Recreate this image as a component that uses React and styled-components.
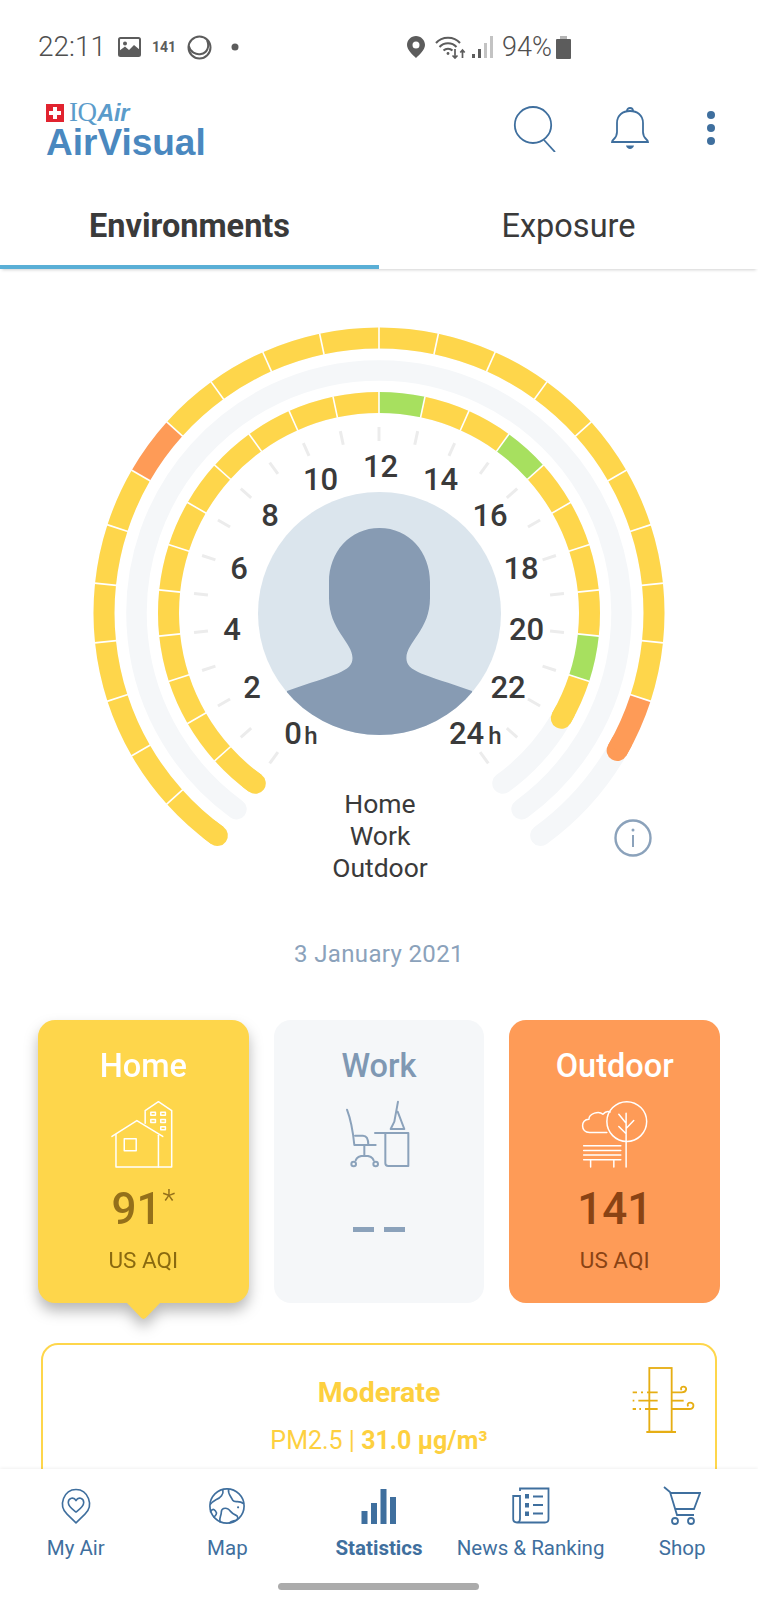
import React from "react";
import styled, { createGlobalStyle } from "styled-components";

const Y = "#fed64b";
const O = "#fe9b57";
const G = "#a7e05f";
const PALE = "#f5f7f9";
const NAVY = "#3f6f9e";
const SLATE = "#8ba2bb";
const INK = "#3a3a3a";

const GlobalStyle = createGlobalStyle`
  html, body { margin: 0; padding: 0; background: #fff; }
  body { font-family: Roboto, "Liberation Sans", sans-serif; }
`;

const Page = styled.div`
  position: relative;
  width: 758px;
  height: 1600px;
  overflow: hidden;
  background: #fff;
`;

/* ---------- status bar ---------- */
const StatusBar = styled.div`
  height: 94px;
  box-sizing: border-box;
  padding: 34px 187px 0 38px;
  display: flex;
  justify-content: space-between;
  align-items: flex-start;
  color: #5c5c5c;
`;
const StatusGroup = styled.div`
  height: 26px;
  display: flex;
  align-items: center;
  gap: ${(p) => p.$gap || 8}px;
`;
const GlyphSlot = styled.span`
  display: flex;
  margin-left: ${(p) => p.$left || 0}px;
`;
const Clock = styled.span`
  font-size: 28px;
  font-weight: 300;
  line-height: 26px;
  color: #4f4f4f;
  margin-right: 4px;
`;
const Tiny = styled.span`
  font-size: 14px;
  font-weight: 700;
  line-height: 26px;
  margin: 0 3px;
`;
const Battery = styled.span`
  font-size: 27px;
  font-weight: 300;
  line-height: 26px;
  color: #4f4f4f;
  margin-right: -5px;
`;

/* ---------- header ---------- */
const Header = styled.header`
  height: 94px;
  box-sizing: border-box;
  padding: 6px 43px 0 46px;
  display: flex;
  justify-content: space-between;
  align-items: flex-start;
`;
const Logo = styled.div`
  display: flex;
  flex-direction: column;
  width: 170px;
`;
const LogoTop = styled.div`
  display: flex;
  align-items: center;
  gap: 5px;
  height: 25px;
`;
const Cross = styled.span`
  position: relative;
  display: block;
  width: 18px;
  height: 18px;
  background: #e1232f;
  &::before, &::after {
    content: "";
    position: absolute;
    background: #fff;
  }
  &::before { left: 7px; top: 3px; width: 4px; height: 12px; }
  &::after { left: 3px; top: 7px; width: 12px; height: 4px; }
`;
const Iq = styled.span`
  font-family: "Liberation Serif", serif;
  font-size: 27px;
  line-height: 24px;
  color: #5b9ccb;
  letter-spacing: -0.6px;
  b {
    font-family: "Liberation Sans", sans-serif;
    font-size: 23.5px;
    font-style: italic;
    font-weight: 700;
    letter-spacing: -0.3px;
    margin-left: 1px;
  }
`;
const AirVisual = styled.div`
  font-family: "Liberation Sans", sans-serif;
  font-weight: 700;
  font-size: 37px;
  line-height: 34px;
  color: #4a88bf;
  margin-top: 1px;
`;
const Actions = styled.div`
  display: flex;
  align-items: flex-start;
  margin-top: 6px;
`;
const ActionIcon = styled.svg`
  display: block;
  margin-left: ${(p) => p.$gap || 0}px;
`;

/* ---------- tabs ---------- */
const Tabs = styled.nav`
  height: 81px;
  display: grid;
  grid-template-columns: 1fr 1fr;
  box-shadow: 0 3px 3px -2px rgba(0, 0, 0, 0.18);
`;
const Tab = styled.div`
  box-sizing: border-box;
  padding-top: 20px;
  text-align: center;
  font-size: 32.5px;
  line-height: 36px;
  color: ${INK};
  font-weight: ${(p) => (p.$active ? 700 : 400)};
  border-bottom: 4px solid ${(p) => (p.$active ? "#5aafd6" : "transparent")};
`;

/* ---------- gauge ---------- */
const GaugeSection = styled.section`
  position: relative;
  height: 669px;
`;
const GaugeSvg = styled.svg`
  display: block;
`;
const HourText = styled.text`
  font-family: Roboto, sans-serif;
  font-size: 31px;
  font-weight: 500;
  fill: ${INK};
  text-anchor: middle;
`;
const UnitText = styled.text`
  font-family: Roboto, sans-serif;
  font-size: 24px;
  font-weight: 500;
  fill: ${INK};
  text-anchor: middle;
`;
const Legend = styled.div`
  position: absolute;
  left: 0;
  right: 0;
  top: 519px;
  text-align: center;
  font-size: 26.5px;
  font-weight: 400;
  line-height: 32px;
  color: ${INK};
  padding-left: 2px;
`;
const InfoBadge = styled.svg`
  position: absolute;
  left: 614px;
  top: 550px;
`;

const DateLine = styled.div`
  text-align: center;
  font-size: 24px;
  line-height: 32px;
  color: ${SLATE};
  letter-spacing: 0.35px;
`;

/* ---------- environment cards ---------- */
const Cards = styled.div`
  margin-top: 50px;
  padding: 0 38px;
  display: grid;
  grid-template-columns: repeat(3, 1fr);
  gap: 25px;
`;
const Card = styled.div`
  position: relative;
  height: 283px;
  box-sizing: border-box;
  padding-top: 28px;
  border-radius: 17px;
  background: ${(p) => p.$bg};
  display: flex;
  flex-direction: column;
  align-items: center;
  ${(p) =>
    p.$selected &&
    `
    filter: drop-shadow(0 8px 7px rgba(0,0,0,.28));
    &::after {
      content: "";
      position: absolute;
      left: 88px;
      bottom: -16px;
      width: 35px;
      height: 17px;
      background: ${p.$bg};
      clip-path: polygon(0 0, 100% 0, 56% 94%, 50% 100%, 44% 94%);
    }
  `}
`;
const CardTitle = styled.div`
  font-size: 32.5px;
  font-weight: 500;
  line-height: 36px;
  color: ${(p) => p.$color};
`;
const CardIcon = styled.svg`
  display: block;
  margin-top: ${(p) => p.$top}px;
  stroke: ${(p) => p.$color};
  fill: none;
`;
const CardValue = styled.div`
  margin-top: 17px;
  height: 48px;
  font-size: 44px;
  font-weight: 500;
  line-height: 48px;
  color: ${(p) => p.$color};
  sup {
    font-size: 30px;
    font-weight: 300;
    line-height: 0;
    vertical-align: 14px;
    margin-left: 1px;
  }
`;
const CardUnit = styled.div`
  margin-top: 13px;
  font-size: 22.5px;
  line-height: 28px;
  color: ${(p) => p.$color};
`;
const Dashes = styled.div`
  margin-top: 52px;
  height: 5px;
  display: flex;
  gap: 10px;
  i {
    display: block;
    width: 21px;
    height: 5px;
    background: ${SLATE};
  }
`;

/* ---------- pollutant card ---------- */
const Pollutant = styled.div`
  position: relative;
  margin: 40px 41px 0 41px;
  height: 200px;
  box-sizing: border-box;
  padding-top: 30px;
  border: 2px solid ${Y};
  border-radius: 17px;
  text-align: center;
`;
const Level = styled.div`
  font-size: 28.5px;
  font-weight: 700;
  line-height: 36px;
  color: #fdd03f;
`;
const Reading = styled.div`
  margin-top: 14px;
  font-size: 25px;
  line-height: 32px;
  color: #fdd03f;
  b { font-weight: 700; }
`;
const WindBadge = styled.svg`
  position: absolute;
  right: 14px;
  top: 15px;
`;

/* ---------- bottom navigation ---------- */
const BottomNav = styled.nav`
  position: absolute;
  left: 0;
  right: 0;
  top: 1469px;
  height: 131px;
  background: #fff;
  box-shadow: 0 -1px 3px rgba(0, 0, 0, 0.06);
`;
const NavGrid = styled.div`
  display: grid;
  grid-template-columns: repeat(5, 1fr);
`;
const NavItem = styled.div`
  display: flex;
  flex-direction: column;
  align-items: center;
  padding-top: 17px;
  font-size: 20.5px;
  line-height: 26px;
  color: ${NAVY};
  font-weight: ${(p) => (p.$active ? 700 : 400)};
  white-space: nowrap;
`;
const NavIconBox = styled.svg`
  display: block;
  height: 40px;
  margin-bottom: 9px;
  stroke: ${NAVY};
  fill: none;
  stroke-width: 1.8;
`;
const HomeBar = styled.div`
  position: absolute;
  left: 278px;
  top: 114px;
  width: 201px;
  height: 7px;
  border-radius: 4px;
  background: #ababab;
`;

/* ---------- gauge geometry ---------- */
const CX = 379;
const CY = 613;
const HOUR_DEG = 12;
const START = -144;
const rad = (d) => (d * Math.PI) / 180;
const pt = (deg, r) => [CX + r * Math.sin(rad(deg)), CY - r * Math.cos(rad(deg))];
const arc = (a, b, r) => {
  const [x0, y0] = pt(a, r);
  const [x1, y1] = pt(b, r);
  return `M${x0.toFixed(2)} ${y0.toFixed(2)}A${r} ${r} 0 ${b - a > 180 ? 1 : 0} 1 ${x1.toFixed(2)} ${y1.toFixed(2)}`;
};
const hourDeg = (h) => START + h * HOUR_DEG;

function Ring({ r, w, colors }) {
  const n = colors.length;
  return (
    <g fill="none">
      <path d={arc(START, 144, r)} stroke={PALE} strokeWidth={w} strokeLinecap="round" />
      {n > 0 && (
        <>
          <path d={arc(hourDeg(0), hourDeg(0) + 2, r)} stroke={colors[0]} strokeWidth={w} strokeLinecap="round" />
          <path d={arc(hourDeg(n) - 2, hourDeg(n), r)} stroke={colors[n - 1]} strokeWidth={w} strokeLinecap="round" />
        </>
      )}
      {colors.map((c, h) => (
        <path key={h} d={arc(hourDeg(h), hourDeg(h + 1), r)} stroke={c} strokeWidth={w} />
      ))}
      {colors.slice(1).map((_, i) => {
        const d = hourDeg(i + 1);
        const [x0, y0] = pt(d, r - w / 2 - 0.5);
        const [x1, y1] = pt(d, r + w / 2 + 0.5);
        return <line key={i} x1={x0} y1={y0} x2={x1} y2={y1} stroke="#fff" strokeWidth="1.6" />;
      })}
    </g>
  );
}

const paint = (n, marks) => Array.from({ length: n }, (_, h) => marks[h] || Y);
const outdoorHours = paint(22, { 7: O, 21: O });
const homeHours = paint(22, { 12: G, 15: G, 20: G });

const HOUR_LABELS = [
  ["12", 380.5, 466],
  ["10", 320.5, 479],
  ["14", 440.5, 479],
  ["8", 270, 515],
  ["16", 490, 515],
  ["6", 239, 568],
  ["18", 521, 568],
  ["4", 232, 629],
  ["20", 526.5, 629],
  ["2", 252, 687],
  ["22", 508, 687],
  ["0", 293, 733],
  ["24", 466.5, 733],
];

function Gauge() {
  return (
    <GaugeSvg width="758" height="668" viewBox="0 269 758 668">
      <defs>
        <clipPath id="avatarClip">
          <circle cx="379.5" cy="613.5" r="121.5" />
        </clipPath>
      </defs>
      <Ring r={275} w={21} colors={outdoorHours} />
      <Ring r={242.5} w={20.5} colors={[]} />
      <Ring r={210.5} w={21} colors={homeHours} />
      {Array.from({ length: 25 }, (_, h) => {
        const [x0, y0] = pt(hourDeg(h), 172);
        const [x1, y1] = pt(hourDeg(h), 186);
        return <line key={h} x1={x0} y1={y0} x2={x1} y2={y1} stroke="#ececec" strokeWidth="3" />;
      })}
      <circle cx="379.5" cy="613.5" r="121.5" fill="#dbe5ed" />
      <path
        clipPath="url(#avatarClip)"
        fill="#879bb3"
        d="M379.5 528C350 528 329 552 329 582L329 598C329 630 352.5 642 352.5 658C352.5 672 335 674 287 691L287 760L472 760L472 691C424 674 406.4 672 406.4 658C406.4 642 430 630 430 598L430 582C430 552 409 528 379.5 528Z"
      />
      {HOUR_LABELS.map(([t, x, y]) => (
        <HourText key={t} x={x} y={y + 11}>
          {t}
        </HourText>
      ))}
      <UnitText x="311" y="744">h</UnitText>
      <UnitText x="495" y="744">h</UnitText>
    </GaugeSvg>
  );
}

/* ---------- icons ---------- */
const ImageGlyph = () => (
  <svg width="23" height="20" viewBox="0 0 23 20">
    <rect x="1" y="1" width="21" height="18" rx="1.5" fill="none" stroke="#5c5c5c" strokeWidth="2" />
    <circle cx="7" cy="6.5" r="2" fill="#5c5c5c" />
    <path d="M1 19V14L7 9.5L11 13L16 8L22 13V19Z" fill="#5c5c5c" />
  </svg>
);
const SwirlGlyph = () => (
  <svg width="25" height="25" viewBox="0 0 25 25" fill="none" stroke="#5c5c5c" strokeWidth="2">
    <circle cx="12.5" cy="12.5" r="11" />
    <path d="M1.8 11C3 17 9 20 14 19C20 18 23 12 20 5" />
  </svg>
);
const DotGlyph = () => (
  <svg width="8" height="8" viewBox="0 0 8 8">
    <circle cx="4" cy="4" r="3.5" fill="#5c5c5c" />
  </svg>
);
const PinGlyph = () => (
  <svg width="18" height="22" viewBox="0 0 18 22">
    <path
      fillRule="evenodd"
      fill="#5c5c5c"
      d="M9 0C4 0 0 4 0 9C0 14 6 19 9 22C12 19 18 14 18 9C18 4 14 0 9 0ZM9 5.5A3.5 3.5 0 1 1 9 12.5A3.5 3.5 0 1 1 9 5.5Z"
    />
  </svg>
);
const WifiGlyph = () => (
  <svg width="31" height="23" viewBox="0 0 31 23" fill="none" stroke="#5c5c5c" strokeWidth="2">
    <path d="M1 7C7 0 19 0 25 7" />
    <path d="M4.5 11C9 6 17 6 21.5 11" />
    <path d="M8.5 14.5C11 12 15 12 17.5 14.5" />
    <circle cx="13" cy="17.5" r="1.4" fill="#5c5c5c" stroke="none" />
    <path d="M20 13V22M17.5 19.5L20 22L22.5 19.5" strokeWidth="1.7" />
    <path d="M27.5 22V14M25.3 16.5L27.5 14L29.7 16.5" strokeWidth="1.7" />
  </svg>
);
const SignalGlyph = () => (
  <svg width="21" height="22" viewBox="0 0 21 22">
    <rect x="0" y="18" width="3" height="4" fill="#5c5c5c" />
    <rect x="6" y="13" width="3" height="9" fill="#5c5c5c" />
    <rect x="12" y="7" width="3" height="15" fill="#c3c3c3" />
    <rect x="18" y="0" width="3" height="22" fill="#c3c3c3" />
  </svg>
);
const BatteryGlyph = () => (
  <svg width="15" height="23" viewBox="0 0 15 23">
    <rect x="4" y="0" width="7" height="3" fill="#b5b5b5" />
    <rect x="0" y="3" width="15" height="20" rx="1" fill="#5c5c5c" />
  </svg>
);

const HomeGlyph = ({ color }) => (
  <CardIcon $color={color} $top={16} width="67" height="68" viewBox="60 60 200 205" strokeWidth="4.5" strokeLinejoin="round" strokeLinecap="round">
    <path d="M65 170L140 122L218 170" />
    <path d="M77 164V262H245V92L205 65L165 92V130" />
    <path d="M205 166V262" />
    <rect x="102" y="177" width="36" height="36" />
    <rect x="182" y="97" width="14" height="9" />
    <rect x="212" y="97" width="14" height="9" />
    <rect x="182" y="119" width="14" height="9" />
    <rect x="212" y="119" width="14" height="9" />
    <rect x="212" y="141" width="14" height="9" />
  </CardIcon>
);
const WorkGlyph = ({ color }) => (
  <CardIcon $color={color} $top={11} width="80" height="80" viewBox="0 0 240 240" strokeWidth="6" strokeLinecap="round" strokeLinejoin="round">
    <path d="M24 44C34 70 42 110 46 150H110" />
    <path d="M48 122H72C84 122 88 132 88 150" />
    <path d="M76 150V183M50 196C56 178 98 178 104 196" />
    <circle cx="44" cy="207" r="7" />
    <circle cx="110" cy="207" r="7" />
    <path d="M108 114H208V213H148C142 213 139 210 139 205V114" />
    <path d="M177 20L166 80L155 102H196L176 50" />
  </CardIcon>
);
const OutdoorGlyph = ({ color }) => (
  <CardIcon $color={color} $top={16} width="67" height="68" viewBox="65 60 200 205" strokeWidth="4.5" strokeLinecap="round" strokeLinejoin="round">
    <circle cx="202" cy="125" r="60" />
    <path d="M200 100V262M178 103L200 130M223 122L200 146M178 140L200 162" />
    <path d="M142 158H90C62 158 62 118 88 118C88 100 118 92 130 103C136 96 145 93 152 96" />
    <path d="M72 198H184M72 212H184M72 226H184M72 240H184M93 240V262M163 240V262" />
  </CardIcon>
);

const WindGlyph = () => (
  <WindBadge width="80" height="80" viewBox="0 0 240 240" fill="none" stroke="#e6ae14" strokeWidth="5.5">
    <rect x="85" y="24" width="67" height="191" />
    <path d="M76 216H165" strokeWidth="6" />
    <path d="M35 97H48M60 97H66M78 97H110M35 122H40M52 122H110M35 147H45M55 147H60M72 147H110" />
    <path d="M152 97H182C198 97 200 80 187 80C180 80 178 86 182 90" />
    <path d="M152 122H188" />
    <path d="M152 147H205C220 147 222 128 207 128C200 128 198 135 202 139" />
  </WindBadge>
);

const MyAirIcon = () => (
  <NavIconBox width="34" viewBox="20 15 110 125" style={{ strokeWidth: 5.2 }}>
    <path d="M75 132L46 104C16 76 36 24 75 24C114 24 134 76 104 104Z" strokeLinejoin="round" />
    <path d="M75 97C62 87 50 79 50 66C50 52 68 46 75 60C82 46 100 52 100 66C100 79 88 87 75 97Z" strokeLinejoin="round" />
  </NavIconBox>
);
const MapIcon = () => (
  <NavIconBox width="38" viewBox="470 18 120 120" style={{ strokeWidth: 5.2 }} strokeLinejoin="round" strokeLinecap="round">
    <circle cx="530" cy="78" r="54" />
    <path d="M517 28C520 40 510 52 495 58C488 62 482 66 478 72" />
    <path d="M535 26C532 40 542 46 548 60C555 70 566 58 582 70" />
    <path d="M478 96C486 82 494 92 497 100C497 106 492 110 489 113" />
    <path d="M508 128C504 116 512 110 512 98C512 86 524 82 534 88C542 94 544 102 556 106C566 110 566 118 560 122C552 126 544 124 538 131" />
    <circle cx="565" cy="82" r="3.5" fill={NAVY} stroke="none" />
  </NavIconBox>
);
const StatsIcon = () => (
  <NavIconBox width="36" viewBox="0 0 36 40" style={{ stroke: "none", fill: NAVY }}>
    <rect x="0.5" y="25" width="6" height="13" />
    <rect x="10" y="17" width="6" height="21" />
    <rect x="19.5" y="3" width="6" height="35" />
    <rect x="29" y="11" width="6" height="27" />
  </NavIconBox>
);
const NewsIcon = () => (
  <NavIconBox width="38" viewBox="0 0 38 40">
    <path d="M8 5V2.5H36.5V33C36.5 35.5 35 36.5 33 36.5H5C2.5 36.5 1.2 35 1.2 33V10H8V33C8 35 6.5 36.5 5 36.5" />
    <path d="M21 10.5H31M21 19H31M21 27.5H31" />
    <rect x="13" y="8" width="4" height="4.5" fill={NAVY} stroke="none" />
    <rect x="13" y="17" width="4" height="4.5" fill={NAVY} stroke="none" />
    <rect x="13" y="25.5" width="4" height="4.5" fill={NAVY} stroke="none" />
  </NavIconBox>
);
const ShopIcon = () => (
  <NavIconBox width="38" viewBox="0 0 38 40">
    <path d="M1 1L7 6L14 29H31" />
    <path d="M7.5 7H37L31 23H12" />
    <circle cx="12" cy="35" r="3" />
    <circle cx="28" cy="35" r="3" />
  </NavIconBox>
);

const NAV_ITEMS = [
  { label: "My Air", Icon: MyAirIcon },
  { label: "Map", Icon: MapIcon },
  { label: "Statistics", Icon: StatsIcon, active: true },
  { label: "News & Ranking", Icon: NewsIcon },
  { label: "Shop", Icon: ShopIcon },
];

export default function App() {
  return (
    <Page>
      <GlobalStyle />
      <StatusBar>
        <StatusGroup>
          <Clock>22:11</Clock>
          <ImageGlyph />
          <Tiny>141</Tiny>
          <SwirlGlyph />
          <GlyphSlot $left={11}>
            <DotGlyph />
          </GlyphSlot>
        </StatusGroup>
        <StatusGroup $gap={9}>
          <PinGlyph />
          <GlyphSlot $left={1}>
            <WifiGlyph />
          </GlyphSlot>
          <GlyphSlot $left={-3}>
            <SignalGlyph />
          </GlyphSlot>
          <Battery>94%</Battery>
          <BatteryGlyph />
        </StatusGroup>
      </StatusBar>

      <Header>
        <Logo>
          <LogoTop>
            <Cross />
            <Iq>
              IQ<b>Air</b>
            </Iq>
          </LogoTop>
          <AirVisual>AirVisual</AirVisual>
        </Logo>
        <Actions>
          <ActionIcon width="44" height="46" viewBox="0 0 44 46" fill="none" stroke={NAVY} strokeWidth="1.8">
            <ellipse cx="20" cy="19" rx="18.2" ry="18" />
            <path d="M31 34L42 46" />
          </ActionIcon>
          <ActionIcon $gap={54} width="38" height="44" viewBox="0 0 38 44" fill="none" stroke={NAVY} strokeWidth="1.8">
            <path d="M1 36C1 33 6 33 6 26V17C6 9 12 5 19 5C26 5 32 9 32 17V26C32 33 37 33 37 36Z" />
            <path d="M16 5C16 1 22 1 22 5" />
            <path d="M15 39.5H23C22 44 16 44 15 39.5Z" fill={NAVY} stroke="none" />
          </ActionIcon>
          <ActionIcon $gap={58} width="8" height="44" viewBox="0 0 8 44" fill={NAVY}>
            <circle cx="4" cy="9" r="4" />
            <circle cx="4" cy="22" r="4" />
            <circle cx="4" cy="35" r="4" />
          </ActionIcon>
        </Actions>
      </Header>

      <Tabs>
        <Tab $active>Environments</Tab>
        <Tab>Exposure</Tab>
      </Tabs>

      <GaugeSection>
        <Gauge />
        <Legend>
          Home
          <br />
          Work
          <br />
          Outdoor
        </Legend>
        <InfoBadge width="38" height="38" viewBox="0 0 38 38" fill="none" stroke={SLATE}>
          <circle cx="19" cy="19" r="17.5" strokeWidth="2.4" />
          <path d="M19 16V28" strokeWidth="2" />
          <circle cx="19" cy="11" r="1.5" fill={SLATE} stroke="none" />
        </InfoBadge>
      </GaugeSection>

      <DateLine>3 January 2021</DateLine>

      <Cards>
        <Card $bg={Y} $selected>
          <CardTitle $color="#fff">Home</CardTitle>
          <HomeGlyph color="#fff" />
          <CardValue $color="#94701a">
            91<sup>*</sup>
          </CardValue>
          <CardUnit $color="#8a6a10">US AQI</CardUnit>
        </Card>
        <Card $bg={PALE}>
          <CardTitle $color="#7f98b3">Work</CardTitle>
          <WorkGlyph color="#8ba2bb" />
          <Dashes>
            <i />
            <i />
          </Dashes>
        </Card>
        <Card $bg={O}>
          <CardTitle $color="#fff">Outdoor</CardTitle>
          <OutdoorGlyph color="#fff" />
          <CardValue $color="#8a4314">141</CardValue>
          <CardUnit $color="#8a4314">US AQI</CardUnit>
        </Card>
      </Cards>

      <Pollutant>
        <Level>Moderate</Level>
        <Reading>
          PM2.5 | <b>31.0 µg/m³</b>
        </Reading>
        <WindGlyph />
      </Pollutant>

      <BottomNav>
        <NavGrid>
          {NAV_ITEMS.map(({ label, Icon, active }) => (
            <NavItem key={label} $active={active}>
              <Icon />
              {label}
            </NavItem>
          ))}
        </NavGrid>
        <HomeBar />
      </BottomNav>
    </Page>
  );
}
